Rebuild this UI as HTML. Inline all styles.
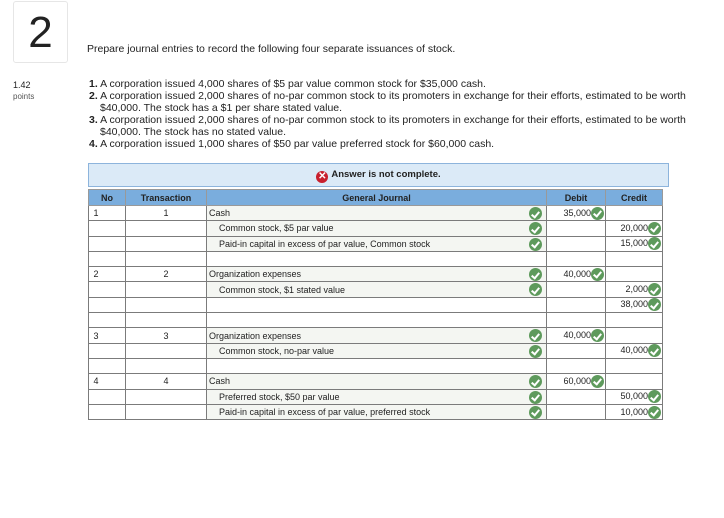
<!DOCTYPE html>
<html><head><style>
body{margin:0;width:724px;height:518px;background:#fff;font-family:"Liberation Sans",sans-serif;color:#222;position:relative;overflow:hidden}
.a{position:absolute;white-space:nowrap}
.box{position:absolute;left:13px;top:1px;width:53px;height:60px;border:1px solid #e6e6e6;border-radius:3px;font-size:44px;text-align:center;line-height:62px;color:#222}
.p{font-size:10.5px;line-height:12px}
.banner{position:absolute;left:88px;top:163px;width:579px;height:22px;background:#dbeaf7;border:1px solid #8db4dc;font-size:9.5px;font-weight:bold;text-align:center;line-height:22px}
.x{display:inline-block;width:12px;height:12px;border-radius:50%;background:#c8202e;color:#fff;font-size:10px;line-height:12px;text-align:center;vertical-align:-2px;margin-right:3px}
table{position:absolute;left:88px;top:189px;border-collapse:collapse;font-size:9px;table-layout:fixed}
td,th{border:1px solid #7b7b7b;padding:0 2px;height:14.3px;white-space:nowrap;overflow:hidden}
th{background:#7aaddd;font-weight:bold;height:15px;border-color:#999}
td.c{text-align:center}
td.g{background:#f4f6f2;position:relative}
td.n{text-align:right;padding-right:1px}
.ck{display:inline-block;width:13px;height:13px;border-radius:50%;background:#5e9a5c;vertical-align:middle;position:relative}
.ck:after{content:"";position:absolute;left:3.5px;top:2.5px;width:3px;height:6px;border:solid #fff;border-width:0 2px 2px 0;transform:rotate(40deg)}
td.g .ck{position:absolute;right:4px;top:1px}
.i{padding-left:12px}
</style></head><body>
<div class="box">2</div>
<div class="a p" style="left:87px;top:43px">Prepare journal entries to record the following four separate issuances of stock.</div>
<div class="a" style="left:13px;top:80px;font-size:9px">1.42</div>
<div class="a" style="left:13px;top:92px;font-size:8px;color:#555">points</div>
<div class="a p" style="left:89px;top:78px"><b>1.</b> A corporation issued 4,000 shares of $5 par value common stock for $35,000 cash.</div>
<div class="a p" style="left:89px;top:90px"><b>2.</b> A corporation issued 2,000 shares of no-par common stock to its promoters in exchange for their efforts, estimated to be worth</div>
<div class="a p" style="left:100px;top:102px">$40,000. The stock has a $1 per share stated value.</div>
<div class="a p" style="left:89px;top:114px"><b>3.</b> A corporation issued 2,000 shares of no-par common stock to its promoters in exchange for their efforts, estimated to be worth</div>
<div class="a p" style="left:100px;top:126px">$40,000. The stock has no stated value.</div>
<div class="a p" style="left:89px;top:138px"><b>4.</b> A corporation issued 1,000 shares of $50 par value preferred stock for $60,000 cash.</div>
<div class="banner"><span class="x">✕</span>Answer is not complete.</div>
<table>
<colgroup><col style="width:37px"><col style="width:81px"><col style="width:340px"><col style="width:59px"><col style="width:57px"></colgroup>
<tr><th>No</th><th>Transaction</th><th>General Journal</th><th>Debit</th><th>Credit</th></tr>
<tr><td>&nbsp;1</td><td class="c">1</td><td class="g">Cash<span class="ck"></span></td><td class="n">35,000<span class="ck"></span></td><td></td></tr>
<tr><td></td><td></td><td class="g i">Common stock, $5 par value<span class="ck"></span></td><td></td><td class="n">20,000<span class="ck"></span></td></tr>
<tr><td></td><td></td><td class="g i">Paid-in capital in excess of par value, Common stock<span class="ck"></span></td><td></td><td class="n">15,000<span class="ck"></span></td></tr>
<tr><td></td><td></td><td></td><td></td><td></td></tr>
<tr><td>&nbsp;2</td><td class="c">2</td><td class="g">Organization expenses<span class="ck"></span></td><td class="n">40,000<span class="ck"></span></td><td></td></tr>
<tr><td></td><td></td><td class="g i">Common stock, $1 stated value<span class="ck"></span></td><td></td><td class="n">2,000<span class="ck"></span></td></tr>
<tr><td></td><td></td><td></td><td></td><td class="n">38,000<span class="ck"></span></td></tr>
<tr><td></td><td></td><td></td><td></td><td></td></tr>
<tr><td>&nbsp;3</td><td class="c">3</td><td class="g">Organization expenses<span class="ck"></span></td><td class="n">40,000<span class="ck"></span></td><td></td></tr>
<tr><td></td><td></td><td class="g i">Common stock, no-par value<span class="ck"></span></td><td></td><td class="n">40,000<span class="ck"></span></td></tr>
<tr><td></td><td></td><td></td><td></td><td></td></tr>
<tr><td>&nbsp;4</td><td class="c">4</td><td class="g">Cash<span class="ck"></span></td><td class="n">60,000<span class="ck"></span></td><td></td></tr>
<tr><td></td><td></td><td class="g i">Preferred stock, $50 par value<span class="ck"></span></td><td></td><td class="n">50,000<span class="ck"></span></td></tr>
<tr><td></td><td></td><td class="g i">Paid-in capital in excess of par value, preferred stock<span class="ck"></span></td><td></td><td class="n">10,000<span class="ck"></span></td></tr>
</table>
</body></html>
